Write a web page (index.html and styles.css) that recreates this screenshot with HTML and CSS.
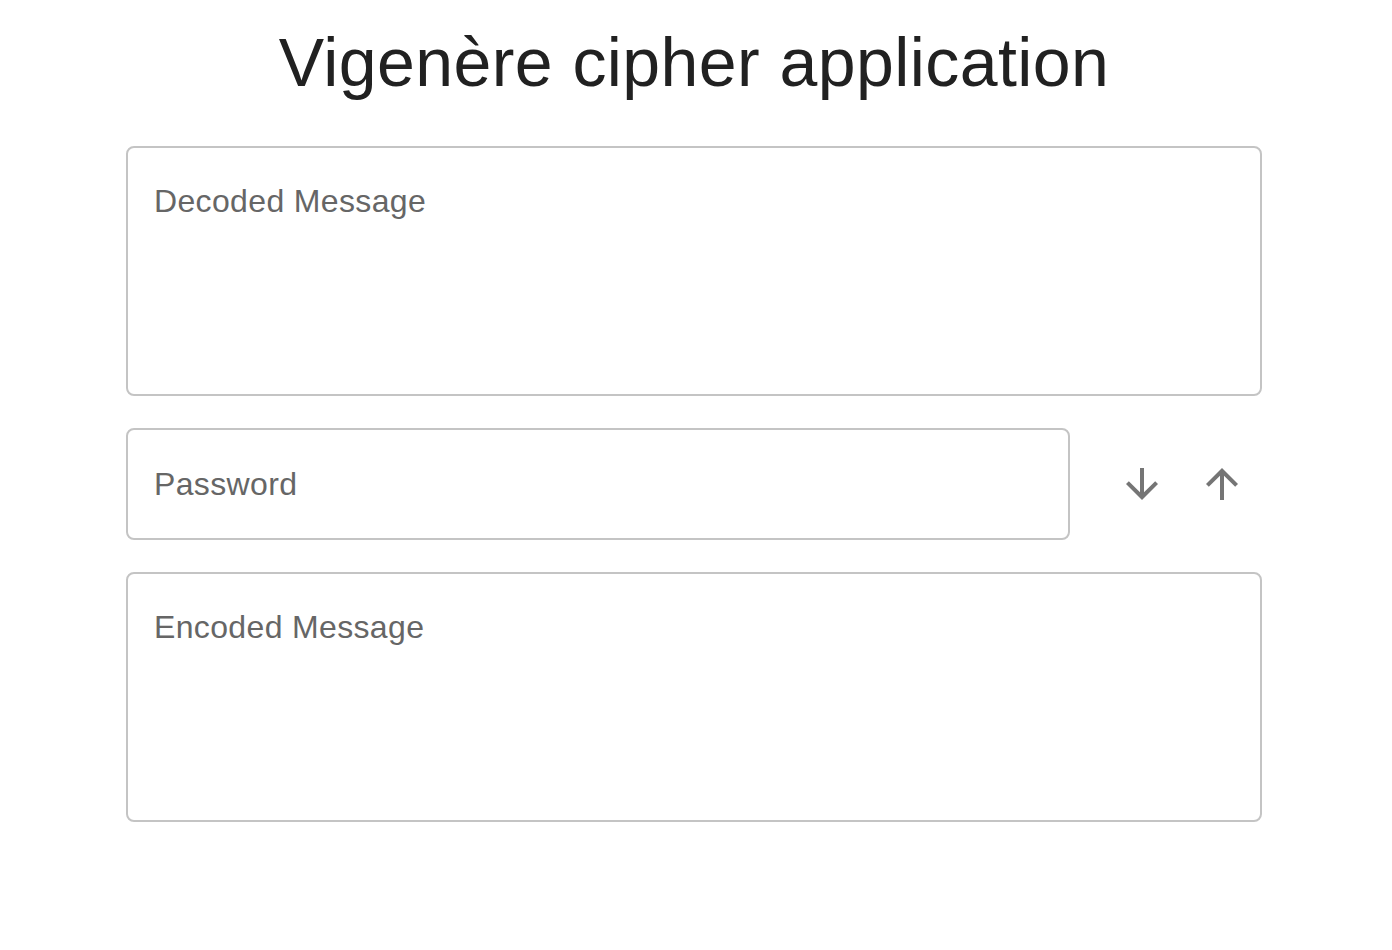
FILE: index.html
```html
<!DOCTYPE html>
<html lang="en">
<head>
<meta charset="utf-8">
<title>Vigenère cipher application</title>
<link rel="stylesheet" href="styles.css">
</head>
<body>
<main class="app">
  <h1 class="title">Vigenère cipher application</h1>
  <textarea class="field field-multi" placeholder="Decoded Message"></textarea>
  <div class="key-row">
    <input class="field field-single" type="text" placeholder="Password">
    <button class="icon-btn" type="button" aria-label="Encode">
      <svg viewBox="0 0 24 24" width="48" height="48"><path d="M20 12l-1.41-1.41L13 16.17V4h-2v12.17l-5.58-5.59L4 12l8 8 8-8z"/></svg>
    </button>
    <button class="icon-btn" type="button" aria-label="Decode">
      <svg viewBox="0 0 24 24" width="48" height="48"><path d="M4 12l1.41 1.41L11 7.83V20h2V7.83l5.58 5.59L20 12l-8-8-8 8z"/></svg>
    </button>
  </div>
  <textarea class="field field-multi" placeholder="Encoded Message"></textarea>
</main>
</body>
</html>
```
FILE: styles.css
```css
html, body {
  margin: 0;
  padding: 0;
  background: #ffffff;
}

body {
  font-family: "Liberation Sans", Arial, sans-serif;
}

.app {
  width: 1136px;
  margin: 0 0 0 126px;
  padding-top: 20px;
  display: flex;
  flex-direction: column;
  gap: 32px;
}

.title {
  margin: 0 0 10px 0;
  font-size: 68px;
  font-weight: 400;
  line-height: 84px;
  letter-spacing: 0.42px;
  text-align: center;
  color: #212121;
}

.field {
  box-sizing: border-box;
  border: 2px solid #c4c4c4;
  border-radius: 8px;
  font-family: "Liberation Sans", Arial, sans-serif;
  font-size: 32px;
  letter-spacing: 0.35px;
  color: #212121;
  background: #ffffff;
  outline: none;
  margin: 0;
}

.field::placeholder {
  color: #666666;
  opacity: 1;
}

.field-multi {
  display: block;
  width: 100%;
  height: 250px;
  padding: 30px 26px;
  line-height: 46px;
  resize: none;
  overflow: hidden;
}

.key-row {
  display: flex;
  align-items: center;
}

.field-single {
  flex: 1;
  height: 112px;
  padding: 0 26px;
  margin-right: 32px;
}

.icon-btn {
  width: 80px;
  height: 80px;
  padding: 16px;
  border: none;
  background: transparent;
  display: flex;
  align-items: center;
  justify-content: center;
  cursor: pointer;
}

.icon-btn svg {
  display: block;
  fill: #757575;
}
```
